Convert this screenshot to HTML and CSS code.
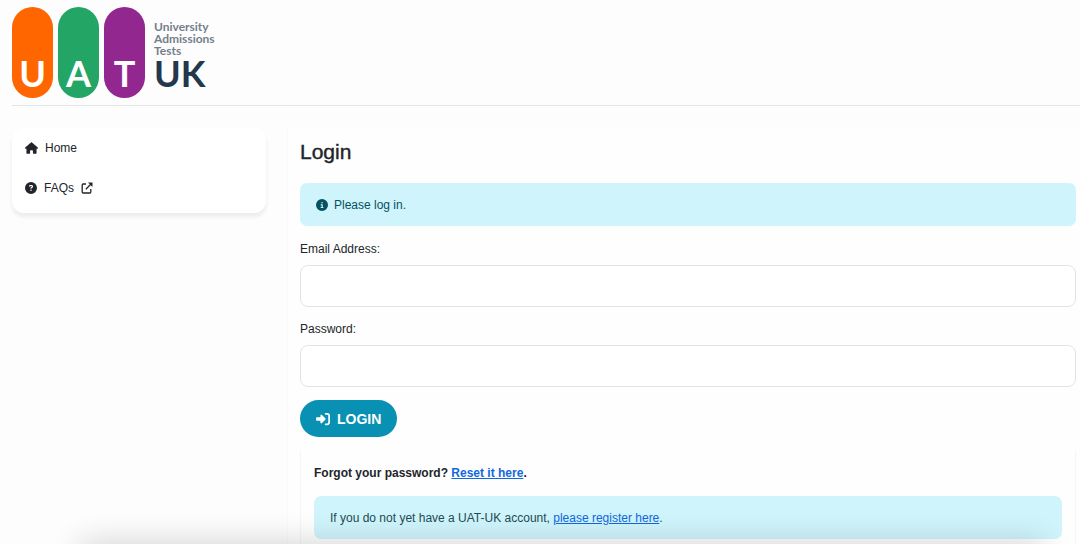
FILE: index.html
```html
<!DOCTYPE html>
<html lang="en">
<head>
<meta charset="utf-8">
<meta name="viewport" content="width=device-width, initial-scale=1">
<title>UAT-UK Login</title>
<link rel="stylesheet" href="styles.css">
</head>
<body>
<header class="header">
  <div class="logo">
    <span class="pill pill-orange">U</span>
    <span class="pill pill-green">A</span>
    <span class="pill pill-purple">T</span>
    <div class="logo-name">
      <span class="logo-small">University</span>
      <span class="logo-small">Admissions</span>
      <span class="logo-small">Tests</span>
      <span class="logo-uk">UK</span>
    </div>
  </div>
</header>
<div class="layout">
  <nav class="sidebar">
    <a class="nav-link" href="#home"><svg class="icon icon-home" viewBox="0 0 576 512"><path d="M575.8 255.5c0 18-15 32.1-32 32.1h-32l.7 160.2c0 2.7-.2 5.4-.5 8.1V472c0 22.1-17.9 40-40 40H392c-22.1 0-40-17.9-40-40V384c0-17.7-14.3-32-32-32H256c-17.7 0-32 14.3-32 32v88c0 22.1-17.9 40-40 40H104c-22.1 0-40-17.9-40-40V287.6H32c-18 0-32-14-32-32.1c0-9 3-17 10-24L266.4 8c7-7 15-8 22-8s15 2 21 7L564.8 231.5c8 7 12 15 11 24z"/></svg><span>Home</span></a>
    <a class="nav-link" href="#faqs"><svg class="icon" viewBox="0 0 512 512"><path d="M256 512A256 256 0 1 0 256 0a256 256 0 1 0 0 512zM169.8 165.3c7.9-22.3 29.1-37.3 52.8-37.3h58.3c34.9 0 63.1 28.3 63.1 63.1c0 22.6-12.1 43.5-31.7 54.8L280 264.4c-.2 13-10.9 23.6-24 23.6c-13.3 0-24-10.7-24-24V250.5c0-8.6 4.6-16.5 12.1-20.8l44.3-25.4c4.7-2.7 7.6-7.7 7.6-13.1c0-8.4-6.8-15.1-15.1-15.1H222.6c-3.4 0-6.4 2.1-7.5 5.3l-.4 1.2c-4.4 12.5-18.2 19-30.6 14.6s-19-18.2-14.6-30.6l.4-1.2zM224 352a32 32 0 1 1 64 0 32 32 0 1 1-64 0z"/></svg><span>FAQs</span><svg class="icon" viewBox="0 0 12 12"><path class="stroke" d="M5 2H2.2Q1.2 2 1.2 3v7q0 1 1 1h6.6q1 0 1-1V7M4.8 7.2L10 2"/><path d="M7 .5h4.5V5z"/></svg></a>
  </nav>
  <main class="main">
    <h1 class="title">Login</h1>
    <div class="alert"><svg class="icon" viewBox="0 0 512 512"><path d="M256 512A256 256 0 1 0 256 0a256 256 0 1 0 0 512zM216 336h24V272H216c-13.3 0-24-10.7-24-24s10.7-24 24-24h48c13.3 0 24 10.7 24 24v88h8c13.3 0 24 10.7 24 24s-10.7 24-24 24H216c-13.3 0-24-10.7-24-24s10.7-24 24-24zm40-208a32 32 0 1 1 0 64 32 32 0 1 1 0-64z"/></svg><span>Please log in.</span></div>
    <form class="form">
      <label class="label" for="email">Email Address:</label>
      <input class="input" id="email" type="email" autocomplete="username">
      <label class="label" for="password">Password:</label>
      <input class="input" id="password" type="password" autocomplete="current-password">
      <button class="button" type="submit"><svg class="icon icon-login" viewBox="0 0 512 512"><path d="M217.9 105.9L340.7 228.7c7.2 7.2 11.3 17.1 11.3 27.3s-4.1 20.1-11.3 27.3L217.9 406.1c-6.4 6.4-15 9.9-24 9.9c-18.7 0-33.9-15.2-33.9-33.9l0-62.1L32 320c-17.7 0-32-14.3-32-32l0-64c0-17.7 14.3-32 32-32l128 0 0-62.1c0-18.7 15.2-33.9 33.9-33.9c9 0 17.6 3.6 24 9.9zM352 416l64 0c17.7 0 32-14.3 32-32l0-256c0-17.7-14.3-32-32-32l-64 0c-17.7 0-32-14.3-32-32s14.3-32 32-32l64 0c53 0 96 43 96 96l0 256c0 53-43 96-96 96l-64 0c-17.7 0-32-14.3-32-32s14.3-32 32-32z"/></svg>LOGIN</button>
    </form>
    <section class="card">
      <p class="forgot">Forgot your password? <a class="link" href="#reset">Reset it here</a>.</p>
      <div class="alert"><span>If you do not yet have a UAT-UK account, <a class="link" href="#register">please register here</a>.</span></div>
    </section>
  </main>
</div>
</body>
</html>
```
FILE: styles.css
```css
* { box-sizing: border-box; }

body {
  margin: 0;
  min-height: 100vh;
  display: flex;
  flex-direction: column;
  background: #fdfdfd;
  color: #212529;
  font: 12px/18px "Liberation Sans", Arial, sans-serif;
}

/* Soft shade along the bottom edge of the window */
body::after {
  content: "";
  position: fixed;
  left: 84px;
  right: 40px;
  bottom: -20px;
  height: 16px;
  box-shadow: 0 0 32px 4px rgba(0, 0, 0, 0.2);
  pointer-events: none;
}

.header {
  margin-left: 12px;
  padding: 7px 0;
  border-bottom: 1px solid #e4e5e6;
}

.logo {
  display: flex;
  gap: 5px;
  font-family: Lato, sans-serif;
}

.pill {
  display: flex;
  align-items: flex-end;
  justify-content: center;
  width: 41px;
  height: 91px;
  padding-bottom: 7px;
  border-radius: 21px;
  color: #fff;
  font-size: 36px;
  line-height: 36px;
  font-weight: 700;
}

.pill-orange { background: #ff6600; }
.pill-green { background: #23a566; }
.pill-purple { background: #92278f; }

.logo-name {
  display: flex;
  flex-direction: column;
  justify-content: flex-end;
  padding: 0 0 9px 4px;
}

.logo-small {
  color: #747f8c;
  font-size: 12px;
  line-height: 12px;
  font-weight: 700;
}

.logo-uk {
  color: #23374d;
  font-size: 36px;
  line-height: 32px;
  font-weight: 700;
}

.layout {
  flex: 1;
  display: grid;
  grid-template-columns: 254px 1fr;
  gap: 21px;
  padding: 22px 0 0 12px;
}

.sidebar {
  align-self: start;
  display: flex;
  flex-direction: column;
  padding-bottom: 5px;
  border-radius: 12px;
  background: #fff;
  box-shadow: 0 4px 4px rgba(0, 0, 0, 0.07);
}

.nav-link {
  display: flex;
  align-items: center;
  gap: 7px;
  padding: 11px 13px;
  color: #212529;
  text-decoration: none;
}

.icon {
  flex: none;
  width: 12px;
  height: 12px;
  fill: currentColor;
}

.icon-home { width: 13px; }
.icon-login { width: 14px; height: 14px; }

.stroke {
  fill: none;
  stroke: currentColor;
  stroke-width: 1.3;
}

.main {
  padding: 12px 4px 0 12px;
  border-left: 1px solid #f9f9f9;
  background: #fefefe;
}

.title {
  margin: 0 0 19px;
  font-size: 21px;
  line-height: 24px;
  font-weight: 400;
  -webkit-text-stroke: 0.4px currentColor;
}

.alert {
  display: flex;
  align-items: center;
  gap: 6px;
  min-height: 43px;
  padding: 12px 16px;
  border-radius: 7px;
  background: #cff4fc;
  color: #055160;
}

.form {
  display: flex;
  flex-direction: column;
  align-items: flex-start;
  padding-top: 14px;
}

.label { margin-bottom: 7px; }

.input {
  width: 100%;
  height: 42px;
  margin-bottom: 13px;
  padding: 8px 12px;
  border: 1px solid #e2e4e6;
  border-radius: 8px;
  background: #fff;
  font: inherit;
}

.button {
  display: flex;
  align-items: center;
  gap: 7px;
  height: 37px;
  padding: 0 16px;
  border: 0;
  border-radius: 19px;
  background: #0891b2;
  color: #fff;
  font: bold 14px/20px "Liberation Sans", Arial, sans-serif;
}

.card {
  margin-top: 13px;
  padding: 14px 13px 5px;
  border-left: 1px solid #f6f6f6;
  border-right: 1px solid #f6f6f6;
}

.forgot {
  margin: 0 0 14px;
  font-weight: bold;
}

.card .alert { color: #244b53; }
.link { color: #1068e0; }
```
